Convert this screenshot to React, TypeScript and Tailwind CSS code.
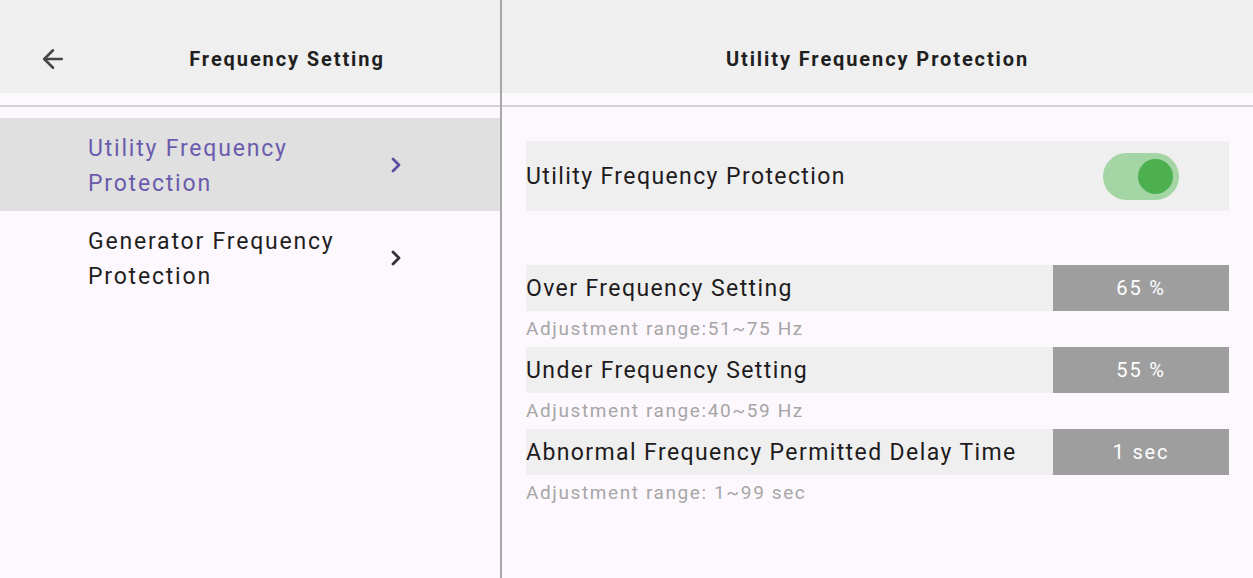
import { ArrowLeft, ChevronRight } from "lucide-react";

const items = [
  { label: "Utility Frequency Protection", active: true },
  { label: "Generator Frequency Protection", active: false },
];

const settings = [
  { label: "Over Frequency Setting", value: "65 %", hint: "Adjustment range:51~75 Hz" },
  { label: "Under Frequency Setting", value: "55 %", hint: "Adjustment range:40~59 Hz" },
  { label: "Abnormal Frequency Permitted Delay Time", value: "1 sec", hint: "Adjustment range: 1~99 sec" },
];

function HeaderBar({ children }: { children: React.ReactNode }) {
  return (
    <div>
      <div className="h-[93px] bg-[#efefef] pt-[25px] flex items-center">{children}</div>
      <div className="h-[12px]" />
      <div className="h-[2px] bg-[#d3cfd5]" />
    </div>
  );
}

export default function App() {
  return (
    <div
      className="h-[578px] w-full flex bg-[#fdf8fd] text-[#1d1b20] overflow-hidden"
      style={{ fontFamily: "Roboto, 'Noto Sans', sans-serif" }}
    >
      {/* left nav */}
      <div className="w-[502px] shrink-0 border-r-2 border-[#a8a6a8] flex flex-col">
        <HeaderBar>
          <div className="pl-[38px] pr-[4px] text-[#444]">
            <ArrowLeft size={30} strokeWidth={2} />
          </div>
          <div className="flex-1 text-center pl-[2px] text-[20px] font-bold tracking-[1.9px] text-[#1f1f1f]">
            Frequency Setting
          </div>
        </HeaderBar>
        <div className="pt-[11px]">
          {items.map((it) => (
            <div
              key={it.label}
              className={`h-[93px] flex items-center pl-[88px] pr-[92px] ${it.active ? "bg-[#e0e0e0]" : ""}`}
            >
              <div
                className={`flex-1 pr-[10px] pt-[2px] text-[23px] leading-[35px] tracking-[1.8px] ${
                  it.active ? "text-[#6a5bac]" : "text-[#1f1f1f]"
                }`}
              >
                {it.label}
              </div>
              <ChevronRight
                size={24}
                strokeWidth={2.8}
                className={it.active ? "text-[#5b4fa0]" : "text-[#333]"}
              />
            </div>
          ))}
        </div>
      </div>

      {/* right content */}
      <div className="flex-1 flex flex-col">
        <HeaderBar>
          <div className="flex-1 text-center text-[20px] font-bold tracking-[1.9px] text-[#1f1f1f]">
            Utility Frequency Protection
          </div>
        </HeaderBar>
        <div className="px-[24px] pt-[34px]">
          <div className="h-[70px] bg-[#efefef] flex items-center justify-between pr-[50px]">
            <span className="pt-[3px] text-[23px] tracking-[1.4px]">Utility Frequency Protection</span>
            <div className="w-[76px] h-[47px] rounded-full bg-[#a3d5a5] flex items-center justify-end pr-[6px]">
              <div className="w-[35px] h-[35px] rounded-full bg-[#4caf50]" />
            </div>
          </div>
          <div className="h-[54px]" />
          {settings.map((s) => (
            <div key={s.label}>
              <div className="h-[46px] bg-[#efefef] flex items-center">
                <span className="flex-1 pt-[3px] text-[23px] tracking-[1.4px]">{s.label}</span>
                <div className="w-[176px] h-full bg-[#9e9e9e] text-white text-[20px] tracking-[1.8px] flex items-center justify-center">
                  {s.value}
                </div>
              </div>
              <div className="h-[36px] flex items-center text-[19px] tracking-[1.6px] text-[#a6a6a6]">
                {s.hint}
              </div>
            </div>
          ))}
        </div>
      </div>
    </div>
  );
}
